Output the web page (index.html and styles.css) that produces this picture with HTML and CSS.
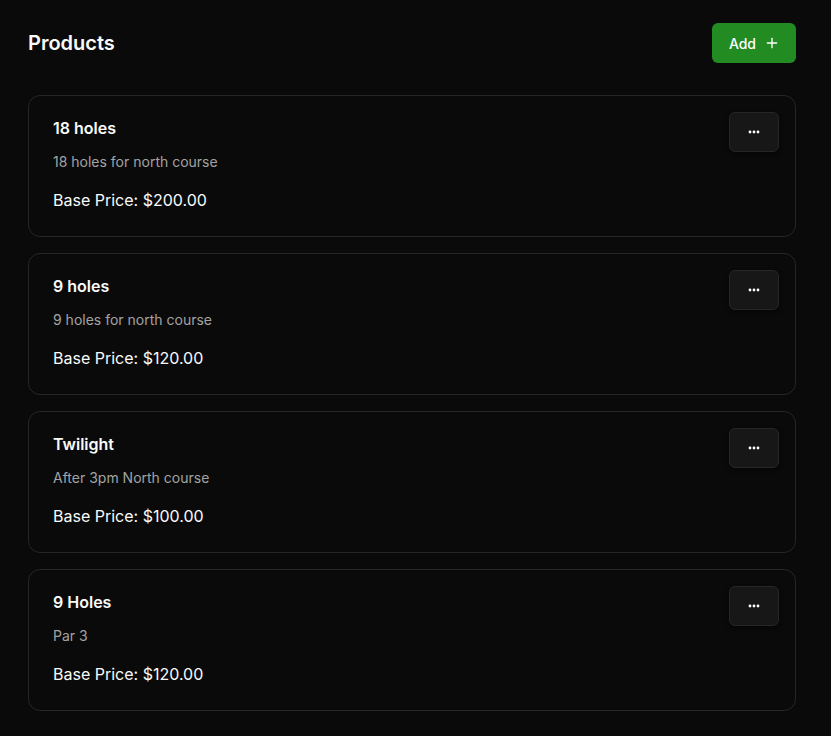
FILE: index.html
```html
<!DOCTYPE html>
<html>
<head>
<meta charset="UTF-8">
<title>Products</title>
<link rel="stylesheet" href="styles.css">
</head>
<body>
	<div class="page">
		<div class="page-head">
			<h1>Products</h1>
			<button class="btn-add">Add
				<svg width="16" height="16" viewBox="0 0 24 24" fill="none" stroke="currentColor" stroke-width="2" stroke-linecap="round"><path d="M5 12h14"/><path d="M12 5v14"/></svg>
			</button>
		</div>

		<div class="product-list">
			<div class="product">
				<div class="product-info">
					<h3>18 holes</h3>
					<p class="desc">18 holes for north course</p>
					<p class="price">Base Price: $200.00</p>
				</div>
				<button class="btn-more"><svg width="12" height="4" viewBox="0 0 12 4" fill="currentColor"><circle cx="2" cy="2" r="1.4"/><circle cx="6" cy="2" r="1.4"/><circle cx="10" cy="2" r="1.4"/></svg></button>
			</div>
			<div class="product">
				<div class="product-info">
					<h3>9 holes</h3>
					<p class="desc">9 holes for north course</p>
					<p class="price">Base Price: $120.00</p>
				</div>
				<button class="btn-more"><svg width="12" height="4" viewBox="0 0 12 4" fill="currentColor"><circle cx="2" cy="2" r="1.4"/><circle cx="6" cy="2" r="1.4"/><circle cx="10" cy="2" r="1.4"/></svg></button>
			</div>
			<div class="product">
				<div class="product-info">
					<h3>Twilight</h3>
					<p class="desc">After 3pm North course</p>
					<p class="price">Base Price: $100.00</p>
				</div>
				<button class="btn-more"><svg width="12" height="4" viewBox="0 0 12 4" fill="currentColor"><circle cx="2" cy="2" r="1.4"/><circle cx="6" cy="2" r="1.4"/><circle cx="10" cy="2" r="1.4"/></svg></button>
			</div>
			<div class="product">
				<div class="product-info">
					<h3>9 Holes</h3>
					<p class="desc">Par 3</p>
					<p class="price">Base Price: $120.00</p>
				</div>
				<button class="btn-more"><svg width="12" height="4" viewBox="0 0 12 4" fill="currentColor"><circle cx="2" cy="2" r="1.4"/><circle cx="6" cy="2" r="1.4"/><circle cx="10" cy="2" r="1.4"/></svg></button>
			</div>
		</div>
	</div>
</body>
</html>
```

FILE: styles.css
```css
body {
	margin: 0;
	background: #0a0a0a;
	color: #fafafa;
	font-family: Inter, "Noto Sans", sans-serif;
}
.page {
	padding: 23px 35px 24px 28px;
}
.page-head {
	display: flex;
	justify-content: space-between;
	align-items: center;
	height: 40px;
	margin-bottom: 32px;
}
.page-head h1 {
	margin: 0;
	font-size: 20px;
	font-weight: 600;
}
.btn-add {
	display: flex;
	align-items: center;
	gap: 8px;
	height: 40px;
	padding: 0 16px 0 17px;
	border: none;
	border-radius: 6px;
	background: #228b22;
	color: #fff;
	font-family: inherit;
	font-size: 14px;
	font-weight: 500;
}

.product-list {
	display: flex;
	flex-direction: column;
	gap: 16px;
}
.product {
	display: flex;
	justify-content: space-between;
	align-items: flex-start;
	border: 1px solid #262626;
	border-radius: 12px;
	padding: 20px 24px 24px 24px;
}
.product h3 {
	margin: 0;
	font-size: 16px;
	line-height: 24px;
	font-weight: 600;
}
.product .desc {
	margin: 12px 0 0;
	font-size: 14px;
	line-height: 20px;
	color: #a3a3a3;
}
.product .price {
	margin: 16px 0 0;
	font-size: 16px;
	line-height: 24px;
}
.btn-more {
	display: flex;
	align-items: center;
	justify-content: center;
	width: 50px;
	height: 40px;
	margin: -4px -8px 0 0;
	border: 1px solid #262626;
	border-radius: 6px;
	background: #171717;
	color: #fff;
	box-shadow: 0 2px 4px rgba(0, 0, 0, 0.5);
}
```
